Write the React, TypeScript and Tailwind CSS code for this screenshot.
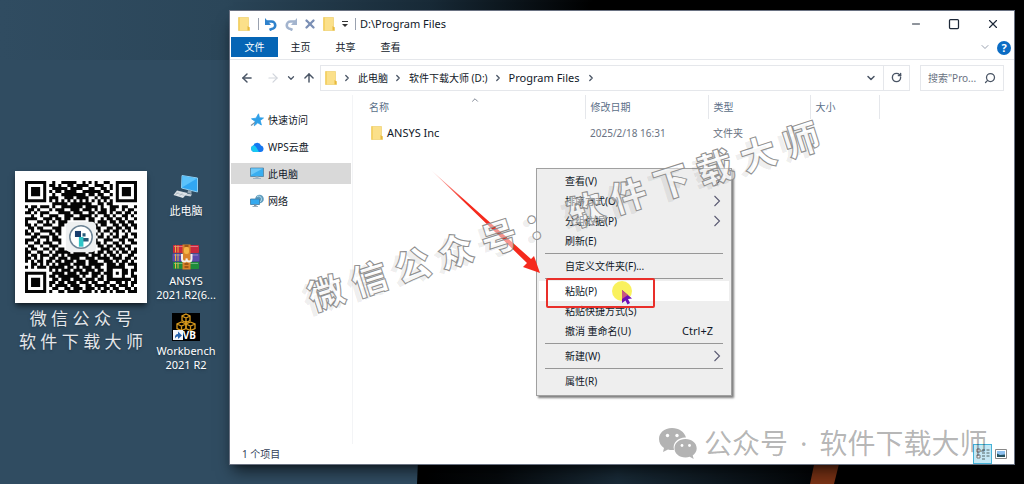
import React from 'react'
import {
  ArrowLeft,
  ArrowRight,
  ArrowUp,
  ChevronDown,
  ChevronRight,
  ChevronUp,
  Minus,
  RotateCw,
  Search,
  Square,
  X
} from 'lucide-react'

const qrRows = [
  '1111111001001111100101010011001111111',
  '1000001011010011011110011100101000001',
  '1011101001111101111001100110101011101',
  '1011101010110111100111111011001011101',
  '1011101001001111111101101100101011101',
  '1000001011100111011110010111001000001',
  '1111111010101010101010101010101111111',
  '0000000001111101111111001101100000000',
  '1011011101001111111011110100111011001',
  '0110100010111001110111010110110010110',
  '1101011100011110111001101110101101101',
  '0010010011100111001111010011010011010',
  '1111001110110110111101100101101101001',
  '1000110101011100000001101110110110110',
  '1101001110011000000000110110011011011',
  '0110110001110000000000011001101101101',
  '1010011110110000000000001011011010100',
  '1101100011010000000000010100101001011',
  '0011011101100000000000001101011011001',
  '1110100101110000000000110011100110110',
  '1001101110010000000000011010011010011',
  '0110010011100000000001001101101101100',
  '1011001101011000000011100111010110101',
  '1100110010111110111101101101101011011',
  '1011011101101011111110111010110100110',
  '1101010011011101110011101111011101101',
  '1010110110110111011101110011101011010',
  '0011010101011110111101111101110110111',
  '1010111011111011010111011001111110001',
  '0000000010101110111011101101100011011',
  '1111111001111011101110111011101011010',
  '1000001011011111110100110101100010011',
  '1011101001101110111011101101111111101',
  '1011101011011011101110110011001101011',
  '1011101010111101110011011110110111010',
  '1000001001100110111011101011011001101',
  '1111111010011011110111010110101110111'
]

const sidebarItems = [
  { label: '快速访问', icon: <StarIcon /> },
  { label: 'WPS云盘', icon: <CloudIcon /> },
  { label: '此电脑', icon: <MonitorIcon />, active: true },
  { label: '网络', icon: <NetworkIcon /> }
]

type MenuEntry = {
  label: string
  shortcut?: string
  submenu?: boolean
  active?: boolean
}

const menuGroups: MenuEntry[][] = [
  [
    { label: '查看(V)', submenu: true },
    { label: '排序方式(O)', submenu: true },
    { label: '分组依据(P)', submenu: true },
    { label: '刷新(E)' }
  ],
  [{ label: '自定义文件夹(F)...' }],
  [
    { label: '粘贴(P)', active: true },
    { label: '粘贴快捷方式(S)' },
    { label: '撤消 重命名(U)', shortcut: 'Ctrl+Z' }
  ],
  [{ label: '新建(W)', submenu: true }],
  [{ label: '属性(R)' }]
]

function FolderIcon() {
  return (
    <svg viewBox="0 0 12 14" className="h-3.5 w-3 shrink-0">
      <path d="M0.5 0.5h10v9l1 1v3H0.5z" fill="#fbe08a" />
      <path d="M0.5 0.5h1.5v13H0.5z" fill="#f6d264" />
      <path d="M9.5 9l2 1.500v3H9.500z" fill="#e8b93c" />
      <path d="M0.500 0.500h10v9l1 1v3h-11z" fill="none" stroke="#edcb62" strokeWidth=".6" />
    </svg>
  )
}

function StarIcon() {
  return (
    <svg viewBox="0 0 14 14" className="h-3.5 w-3.5">
      <path
        d="M8.500 .8l1 4 4 .2-3.300 2.500 1.200 4.500-3.600-2.200-3.500 3 .8-4.500L1.500 5.800l4.500-.6z"
        fill="#2fa0e8"
        stroke="#2fa0e8"
        strokeWidth=".8"
      />
      <path d="M1 12.500l4-3" stroke="#7b8fa0" strokeWidth="1.200" />
    </svg>
  )
}

function CloudIcon() {
  return (
    <svg viewBox="0 0 14 12" className="h-3 w-3.5">
      <path d="M4 11a3.500 3.500 0 01-.5-6.800A4 4 0 0111 4.500 3.300 3.300 0 0110.500 11z" fill="#1677f0" />
      <path d="M4 11a3.500 3.500 0 01-.5-6.800C6 4.500 7 8 9 11z" fill="#19c9f2" />
    </svg>
  )
}

function MonitorIcon() {
  return (
    <svg viewBox="0 0 14 13" className="h-[13px] w-3.5">
      <path d="M.5 1h13v8.500H.5z" fill="#3aaef0" stroke="#53809c" strokeWidth=".8" />
      <path d="M1 1.400h12L1 8z" fill="#6cc8f8" />
      <path d="M5.500 9.500h3v1.500h2.500v1H3v-1h2.500z" fill="#9fb3c2" />
    </svg>
  )
}

function NetworkIcon() {
  return (
    <svg viewBox="0 0 14 13" className="h-[13px] w-3.5">
      <circle cx="9.500" cy="5" r="4.300" fill="#5f9cbd" />
      <path d="M7 2.500c2-1 4 0 4.500 2S10 8 9.500 8.500" stroke="#b5dcee" fill="none" />
      <path d="M.5 5h9v5.500h-9z" fill="#35a9ee" stroke="#3c7ba5" strokeWidth=".8" />
      <path d="M4 10.500h2.500V12H8v.8H2.500V12H4z" fill="#7e95a5" />
    </svg>
  )
}

function ComputerIcon() {
  return (
    <svg viewBox="0 0 28 28" className="size-7">
      <path d="M10 2.500l15.500 2.500v14L9.500 15z" fill="#31a7f2" stroke="#8ccdf0" />
      <path d="M10.500 3l14.500 2.400L10 14.500z" fill="#5cc3fb" />
      <path d="M16 17l3.500 1v3l-4-1z" fill="#93a5b2" />
      <path d="M12 20l8 1.500-1.500 2-8-1.500z" fill="#c9d2d9" />
      <path d="M5 17.500l10.500 2.500-4.500 5L1.500 22z" fill="#dfe4e8" />
      <path d="M4 20l8.500 2.400M7 18.500L3 22.500M11 19.500l-4 4" stroke="#9ba8b2" strokeWidth=".6" />
    </svg>
  )
}

function ArchiveIcon() {
  return (
    <svg viewBox="0 0 28 28" className="size-7">
      <rect x="1" y="2" width="26" height="8" rx="1" fill="#c8283f" />
      <rect x="0.500" y="10.500" width="27" height="8" rx="1" fill="#5b4bab" />
      <rect x="1" y="19" width="26" height="7" rx="1" fill="#1f8b3c" />
      <path d="M2 3.500h24M2 12h24M2 20.500h24" stroke="#fff" strokeOpacity=".35" />
      <path d="M3.500 2.500v7M3.500 11v7M3.500 19.500v6M6 2.500v7M6 11v7M6 19.500v6" stroke="#e9b63c" />
      <rect x="10.500" y="1.500" width="8" height="25" fill="#d9822b" />
      <path d="M12.500 3h4M12.500 21h4M12.500 24h4" stroke="#8d4a12" strokeWidth="1.500" />
      <rect x="12" y="4" width="5" height="7" rx="2" fill="#f3b447" />
      <path d="M10 11v5q0 2.500 2.500 2.500t2-3q0 3 2.500 3T19.500 16v-5" fill="none" stroke="#f4f0ea" strokeWidth="2" />
    </svg>
  )
}

function WorkbenchIcon() {
  return (
    <div className="relative size-7 bg-black">
      <svg viewBox="0 0 28 28" className="absolute inset-0 size-7">
        <g fill="none" stroke="#d99a1c" strokeWidth="1.300">
          <path d="M14 1l4 2v4.500l-4 2-4-2V3zM10 3l4 2 4-2M14 5v4.500" />
          <path d="M9.500 9l4.500 2v4.500l-4.500 2-4.500-2V11zM5 11l4.500 2L14 11M9.500 13v4.500" />
          <path d="M18.500 9l4.500 2v4.500l-4.500 2-4.500-2V11zM14 11l4.500 2L23 11M18.500 13v4.500" />
        </g>
        <path d="M1 17h10v10H1z" fill="#f2f5f8" />
        <path d="M3 25.500q-.5-4.500 3-4.500v-2.500l4 4-4 3.500V23.500q-2-.3-3 2z" fill="#2563ae" />
      </svg>
      <span className="absolute right-1 bottom-0 text-[10px] leading-3 font-bold text-white">VB</span>
    </div>
  )
}

function QrCode() {
  const path = qrRows
    .map((row, y) =>
      row
        .split('')
        .map((cell, x) => (cell === '1' ? `M${x} ${y}h1v1h-1z` : ''))
        .join('')
    )
    .join('')
  return (
    <svg viewBox="0 0 37 37" className="size-[132px] bg-white p-2.5 shadow-md shadow-black/50">
      <path d={path} fill="#050505" />
      <rect x="13.500" y="13.500" width="10" height="10" rx="1.500" fill="#eef0f1" />
      <circle cx="18.500" cy="18.500" r="3.700" fill="#fff" stroke="#6d8496" strokeWidth=".5" />
      <path d="M16.500 16.500h2v2h-2z" fill="#193e6e" />
      <path d="M18 18.800h3v1.200h-3zM19 17.300h1v1h-1z" fill="#2a5a78" />
      <path d="M17.800 18.500h1.500v3.200h-1.500z" fill="#30c5c8" />
    </svg>
  )
}

type ShortcutProps = {
  icon: React.ReactNode
  lines: string[]
}

function DesktopShortcut({ icon, lines }: ShortcutProps) {
  return (
    <a href="#" className="flex h-[70px] flex-col items-center gap-[3px]">
      {icon}
      <span className="text-center text-[11px] leading-[14px] whitespace-nowrap text-white text-shadow-md">
        {lines.map((line) => (
          <span key={line} className="block">
            {line}
          </span>
        ))}
      </span>
    </a>
  )
}

function Wallpaper() {
  return (
    <svg
      viewBox="0 0 1024 484"
      preserveAspectRatio="none"
      className="absolute inset-0 h-full w-full"
    >
      <defs>
        <linearGradient id="top">
          <stop offset="0" stopColor="#304c61" />
          <stop offset=".22" stopColor="#2b4659" />
          <stop offset=".42" stopColor="#182a37" />
          <stop offset=".58" stopColor="#000" />
        </linearGradient>
        <linearGradient id="glow">
          <stop offset="0" stopColor="#000" />
          <stop offset=".2" stopColor="#05090c" />
          <stop offset=".5" stopColor="#192b38" />
          <stop offset="1" stopColor="#020406" />
        </linearGradient>
      </defs>
      <path d="M0 0h1024v484H0z" fill="#000" />
      <path d="M0 0h1024v60H0z" fill="url(#top)" />
      <path d="M0 60h490L418 484H0z" fill="#304c61" />
      <path d="M418 460h400v24H417z" fill="url(#glow)" />
      <path d="M815 460h25l-6 24h-24z" fill="#793215" />
    </svg>
  )
}

function Desktop() {
  return (
    <div className="relative flex w-[230px] shrink-0 items-start gap-2.5 pl-[15px]">
      <div className="flex w-[132px] flex-col items-center pt-[171px]">
        <QrCode />
        <p className="mt-1 text-center text-[17px] leading-[23px] whitespace-nowrap text-gray-200 text-shadow-md">
          微 信 公 众 号
          <br />软 件 下 载 大 师
        </p>
      </div>
      <nav className="w-[58px] pt-[173px]">
        <DesktopShortcut icon={<ComputerIcon />} lines={['此电脑']} />
        <DesktopShortcut icon={<ArchiveIcon />} lines={['ANSYS', '2021.R2(6...']} />
        <DesktopShortcut icon={<WorkbenchIcon />} lines={['Workbench', '2021 R2']} />
      </nav>
    </div>
  )
}

function TitleBar() {
  return (
    <header className="flex h-[26px] items-center pl-2">
      <FolderIcon />
      <span className="ml-2 h-3 w-px bg-gray-400" />
      <button aria-label="撤消" className="ml-1.5">
        <svg viewBox="0 0 12 14" className="h-3.5 w-3">
          <path d="M2 4.500h4.500a3.500 3.500 0 010 7.500l-2 1" fill="none" stroke="#2f82cc" strokeWidth="2.600" />
          <path d="M0 1v7h6z" fill="#2f82cc" />
        </svg>
      </button>
      <button aria-label="恢复" className="ml-2">
        <svg viewBox="0 0 12 14" className="h-3.5 w-3">
          <path d="M10 4.500H5.500a3.500 3.500 0 000 7.500l2 1" fill="none" stroke="#a3b4ce" strokeWidth="2.600" />
          <path d="M12 1v7H6z" fill="#a3b4ce" />
        </svg>
      </button>
      <button aria-label="删除" className="ml-1.5">
        <X className="size-3.5 text-[#7b8fb5]" strokeWidth={4} />
      </button>
      <button aria-label="新建文件夹" className="ml-1.5">
        <FolderIcon />
      </button>
      <button aria-label="自定义快速访问工具栏" className="ml-1.5">
        <svg viewBox="0 0 8 8" className="size-2">
          <path d="M1 1.500h6" stroke="#333" />
          <path d="M1 4h6L4 7z" fill="#333" />
        </svg>
      </button>
      <span className="ml-1.5 h-3 w-px bg-gray-400" />
      <h1 className="ml-1 text-[11px]">D:\Program Files</h1>
      <div className="ml-auto flex items-center gap-[26px] pr-3.5 text-gray-800">
        <button aria-label="最小化">
          <Minus className="size-3" strokeWidth={2} />
        </button>
        <button aria-label="最大化">
          <Square className="size-3" strokeWidth={2.5} />
        </button>
        <button aria-label="关闭">
          <X className="size-3.5" strokeWidth={2} />
        </button>
      </div>
    </header>
  )
}

function Ribbon() {
  return (
    <div className="flex h-[23px] items-start border-b border-gray-200">
      <button className="ml-px h-5 w-[47px] bg-[#0565b5] text-white">文件</button>
      <button className="h-5 w-[45px]">主页</button>
      <button className="h-5 w-[45px]">共享</button>
      <button className="h-5 w-[45px]">查看</button>
      <button aria-label="展开功能区" className="mt-1 ml-auto">
        <ChevronDown className="size-3 text-gray-400" />
      </button>
      <button
        aria-label="帮助"
        className="mt-1 mr-[3px] ml-1.5 size-3.5 rounded-full bg-[#0b6cc4] text-[11px] leading-[14px] font-bold text-white"
      >
        ?
      </button>
    </div>
  )
}

function AddressBar() {
  return (
    <div className="flex h-[35px] items-center pr-2.5 pl-2.5 text-gray-600">
      <button aria-label="后退">
        <ArrowLeft className="size-3.5" strokeWidth={2.5} />
      </button>
      <button aria-label="前进" className="ml-3">
        <ArrowRight className="size-3.5 text-gray-300" strokeWidth={2} />
      </button>
      <button aria-label="最近浏览的位置" className="ml-1.5">
        <ChevronDown className="size-2.5" strokeWidth={3} />
      </button>
      <button aria-label="上一级" className="ml-1.5">
        <ArrowUp className="size-3.5" strokeWidth={2.5} />
      </button>
      <div className="ml-1 flex h-[26px] flex-1 items-center border border-gray-200 pl-1 text-gray-900">
        <FolderIcon />
        <Crumb>此电脑</Crumb>
        <Crumb>软件下载大师 (D:)</Crumb>
        <Crumb>
          <span className="text-[11px]">Program Files</span>
        </Crumb>
        <ChevronRight className="ml-1.5 size-2.5 text-gray-600" strokeWidth={3} />
        <button aria-label="以前的位置" className="mr-1.5 ml-auto">
          <ChevronDown className="size-3 text-gray-600" strokeWidth={3} />
        </button>
        <button
          aria-label="刷新"
          className="flex h-full w-[26px] items-center justify-center border-l border-gray-200"
        >
          <RotateCw className="size-[11px] text-gray-600" strokeWidth={3} />
        </button>
      </div>
      <label className="ml-2.5 flex h-[26px] w-[84px] items-center border border-gray-200 px-[7px]">
        <input
          aria-label="搜索"
          placeholder={'搜索"Pro...'}
          className="w-full min-w-0 bg-transparent placeholder:text-gray-500"
        />
        <Search className="size-3 shrink-0 -scale-x-100" strokeWidth={2.5} />
      </label>
    </div>
  )
}

function Crumb({ children }: { children: React.ReactNode }) {
  return (
    <>
      <ChevronRight className="mr-1.5 ml-[5px] size-2.5 text-gray-600" strokeWidth={3} />
      <a href="#" className="whitespace-nowrap">
        {children}
      </a>
    </>
  )
}

function Sidebar() {
  return (
    <nav className="w-[123px] shrink-0 border-r border-gray-100 pt-3.5 pr-px pl-px">
      {sidebarItems.map((item) => (
        <a
          key={item.label}
          href="#"
          className={`mb-1.5 flex h-[21px] items-center gap-1 pl-[19px] ${
            item.active ? 'bg-[#d9d9d9]' : ''
          }`}
        >
          {item.icon}
          {item.label}
        </a>
      ))}
    </nav>
  )
}

function FileList() {
  return (
    <div className="relative flex-1">
      <ChevronUp className="absolute top-0 left-[117px] size-2.5 text-gray-500" />
      <table className="w-full table-fixed text-left">
        <colgroup>
          <col className="w-[232px]" />
          <col className="w-[123px]" />
          <col className="w-[102px]" />
          <col className="w-[69px]" />
          <col />
        </colgroup>
        <thead>
          <tr className="h-6 text-[#5b6f88]">
            <th className="border-r border-gray-200 pl-4 font-normal">名称</th>
            <th className="border-r border-gray-200 pl-[5px] font-normal">修改日期</th>
            <th className="border-r border-gray-200 pl-[5px] font-normal">类型</th>
            <th className="border-r border-gray-200 pl-[5px] font-normal">大小</th>
            <td />
          </tr>
        </thead>
        <tbody>
          <tr className="h-7 text-gray-500">
            <td className="pl-[18px]">
              <a href="#" className="flex items-center gap-1 text-[11px] text-gray-900">
                <FolderIcon />
                ANSYS Inc
              </a>
            </td>
            <td className="pl-[5px]">2025/2/18 16:31</td>
            <td className="pl-[5px]">文件夹</td>
            <td />
            <td />
          </tr>
        </tbody>
      </table>
    </div>
  )
}

function StatusBar() {
  return (
    <footer className="flex h-5 items-center pr-[7px] pl-3 text-slate-700">
      <span>1 个项目</span>
      <button
        aria-label="详细信息"
        className="ml-auto flex h-5 w-[19px] items-center justify-center border border-[#45b3d8] bg-[#c5e8f5]"
      >
        <svg viewBox="0 0 14 12" className="h-3 w-3.5">
          <path d="M1 1h3v3H1zM1 7h3v3H1z" fill="#fff" stroke="#777" />
          <path d="M6 2h3M10.500 2h3M6 5h3M10.500 5h3M6 8h3M10.500 8h3M6 11h3" stroke="#566" />
        </svg>
      </button>
      <button aria-label="大缩略图" className="ml-[3px]">
        <svg viewBox="0 0 12 10" className="h-2.5 w-3">
          <path d="M.5.5h11v9H.5z" fill="#fff" stroke="#888" />
          <path d="M2 2h8v6H2z" fill="#8dc0f0" />
          <path d="M2 4.500l3 1.500 5-.5V8H2z" fill="#24505e" />
        </svg>
      </button>
    </footer>
  )
}

function ContextMenu() {
  return (
    <div
      role="menu"
      className="absolute top-[168px] left-[536px] w-[196px] border border-[#a0a0a0] bg-[#eeeeee] px-0.5 pt-0.5 pb-1 shadow-[2px_2px_2px_#00000080]"
    >
      {menuGroups.map((group, index) => (
        <div key={index}>
          {index > 0 && (
            <div className="flex h-[5px] items-center px-1.5">
              <hr className="w-full border-[#979797]" />
            </div>
          )}
          {group.map((item) => (
            <button
              key={item.label}
              role="menuitem"
              className={`flex h-5 w-full items-center pr-2 pl-[26px] ${
                item.active ? 'bg-white' : ''
              }`}
            >
              {item.label}
              {item.shortcut && (
                <span className="mr-2 ml-auto text-[11px]">{item.shortcut}</span>
              )}
              {item.submenu && (
                <svg viewBox="0 0 8 12" className="ml-auto h-3 w-2">
                  <path d="M1.500 1l5 5-5 5" fill="none" stroke="#5a5a72" strokeWidth="1.100" />
                </svg>
              )}
            </button>
          ))}
        </div>
      ))}
    </div>
  )
}

function PointerMarks() {
  return (
    <>
      <svg viewBox="0 0 114 106" className="absolute top-[168px] left-[429px] h-[106px] w-[114px]">
        <defs>
          <linearGradient id="arrow" x1="0" y1="0" x2="1" y2="1">
            <stop offset="0" stopColor="#f52a1d" stopOpacity=".15" />
            <stop offset=".3" stopColor="#f52a1d" />
          </linearGradient>
        </defs>
        <path d="M2 2L102 91l3-3 6 17-17-6 4-4z" fill="url(#arrow)" />
      </svg>
      <div className="absolute top-[278px] left-[546px] h-[30px] w-[109px] rounded-xs border-2 border-[#e92f2a]" />
      <div className="absolute top-[281px] left-[612px] size-5 rounded-full bg-[#f7ee35]/80" />
      <svg viewBox="0 0 12 16" className="absolute top-[289px] left-[621px] h-4 w-3">
        <path d="M1 1l10 8.500-4 .5 2 4-2.500 1.500-2-4L1 14z" fill="#6d10b5" />
        <path d="M1 1l6 5-6 4z" fill="#c9567f" />
      </svg>
    </>
  )
}

function Watermarks() {
  return (
    <div className="pointer-events-none">
      <p className="absolute top-[190px] left-[284px] w-[560px] -rotate-[17.8deg] text-center text-[36px] leading-[54px] font-black whitespace-nowrap text-white/50 [-webkit-text-stroke:1px_#8f8f8f] text-shadow-[-6px_2px_0_#00000012]">
        微 信 公 众 号 ： 软 件 下 载 大 师
      </p>
      <div className="absolute top-[422px] left-[658px] flex items-center gap-1.5 text-[28px] leading-[42px] whitespace-nowrap text-black/30">
        <svg viewBox="0 0 40 32" className="h-8 w-10">
          <path
            d="M14 1C6 1 1 6 1 12c0 4 2 7 5 9l-1 4 5-2.500c2 .5 4 .6 6 .4C14 15 21 10 28 10.500 26.500 5 21 1 14 1z"
            fill="#b3b3b3"
          />
          <path
            d="M27.500 12c-6.500 0-11 4-11 9.300s4.500 9.200 11 9.200c1.500 0 3-.2 4.200-.7l4 2.200-1-3.500c2.500-1.800 4-4.200 4-7.200 0-5.300-5-9.300-11.200-9.300z"
            fill="#b3b3b3"
          />
          <g fill="#fff">
            <circle cx="9.500" cy="8.500" r="1.700" />
            <circle cx="19" cy="8.500" r="1.700" />
            <circle cx="24" cy="18.500" r="1.400" />
            <circle cx="31.500" cy="18.500" r="1.400" />
          </g>
        </svg>
        <span>公众号</span>
        <span className="px-1.5">·</span>
        <span>软件下载大师</span>
      </div>
    </div>
  )
}

function App() {
  return (
    <div className="relative flex min-h-screen overflow-hidden font-['Noto_Sans','Noto_Sans_CJK_SC',sans-serif] text-[10px] leading-[14px] text-gray-900">
      <Wallpaper />
      <Desktop />
      <div className="relative flex min-w-0 flex-1 pt-[11px] pr-2.5 pb-5">
        <main className="flex min-w-0 flex-1 flex-col bg-white shadow-lg ring-1 shadow-black/60 ring-gray-500">
          <TitleBar />
          <Ribbon />
          <AddressBar />
          <div className="flex flex-1">
            <Sidebar />
            <FileList />
          </div>
          <StatusBar />
        </main>
      </div>
      <ContextMenu />
      <PointerMarks />
      <Watermarks />
    </div>
  )
}

export default App
